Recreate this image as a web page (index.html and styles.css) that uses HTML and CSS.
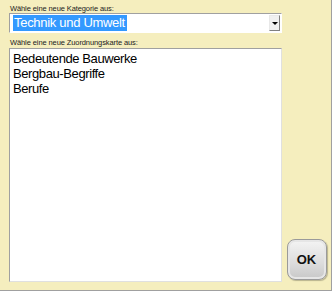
FILE: index.html
```html
<!DOCTYPE html>
<html lang="de">
<head>
    <meta charset="UTF-8">
    <title>Zuordnungskarte</title>
    <link rel="stylesheet" href="styles.css">
</head>
<body>
    <div class="dialog">
        <div class="main">
            <div class="caption">Wähle eine neue Kategorie aus:</div>
            <div class="combo">
                <span class="combo-text">Technik und Umwelt</span>
                <span class="combo-btn"><span class="arrow"></span></span>
            </div>
            <div class="caption second">Wähle eine neue Zuordnungskarte aus:</div>
            <ul class="listbox">
                <li>Bedeutende Bauwerke</li>
                <li>Bergbau-Begriffe</li>
                <li>Berufe</li>
            </ul>
        </div>
        <div class="side">
            <button class="ok">OK</button>
        </div>
    </div>
</body>
</html>
```

FILE: styles.css
```css
body {
    margin: 0;
    padding: 0;
    background-color: #f5eebe;
    font-family: "Liberation Sans", Arial, sans-serif;
}

.dialog {
    width: 332px;
    height: 291px;
    box-sizing: border-box;
    background-color: #f5eebe;
    border-right: 1px solid #a0a0a0;
    border-bottom: 1px solid #a0a0a0;
    display: flex;
    padding: 4px 0 0 9px;
}

.main {
    width: 273px;
    display: flex;
    flex-direction: column;
}

.caption {
    font-family: "Liberation Sans", Arial, sans-serif;
    font-size: 7.5px;
    letter-spacing: -0.1px;
    color: #222;
    height: 9px;
    line-height: 9px;
    padding-left: 1px;
}

.second {
    margin-top: 5px;
    margin-bottom: 1px;
}

.combo {
    height: 20px;
    box-sizing: border-box;
    background: #fff;
    border-top: 1px solid #a0a0a0;
    border-left: 1px solid #a0a0a0;
    border-right: 1px solid #fff;
    border-bottom: 1px solid #fff;
    display: flex;
    align-items: center;
    justify-content: space-between;
    padding: 1px 1px 1px 3px;
}

.combo-text {
    background: #3399ff;
    color: #fff;
    font-size: 13px;
    letter-spacing: -0.3px;
    line-height: 16px;
    padding: 0 2px 0 1px;
}

.combo-btn {
    width: 11px;
    height: 16px;
    box-sizing: border-box;
    background: #f0f0f0;
    border: 1px solid #e8e8e8;
    border-right-color: #808080;
    border-bottom-color: #808080;
    display: flex;
    align-items: center;
    justify-content: center;
}

.arrow {
    width: 0;
    height: 0;
    border-left: 3px solid transparent;
    border-right: 3px solid transparent;
    border-top: 3px solid #000;
}

.listbox {
    list-style: none;
    margin: 0;
    padding: 2px 3px;
    height: 234px;
    box-sizing: border-box;
    background: #fff;
    border-top: 1px solid #a0a0a0;
    border-left: 1px solid #a0a0a0;
    border-right: 1px solid #e0e0e0;
    border-bottom: 1px solid #e0e0e0;
    font-size: 13px;
    letter-spacing: -0.4px;
    line-height: 15px;
    color: #000;
}

.side {
    flex: 1;
    display: flex;
    align-items: flex-end;
    justify-content: center;
    padding-bottom: 10px;
}

.ok {
    width: 40px;
    height: 41px;
    border: 1px solid #9a9a9a;
    border-radius: 8px;
    background: linear-gradient(to bottom, #f4f4f4 0%, #dcdcdc 60%, #c8c8c8 100%);
    box-shadow: inset 0 0 0 2px #e6e6e6, 1px 1px 1px rgba(0, 0, 0, 0.25);
    font-family: "Liberation Sans", Arial, sans-serif;
    font-weight: bold;
    font-size: 13px;
    color: #111;
    padding: 0;
}
```
